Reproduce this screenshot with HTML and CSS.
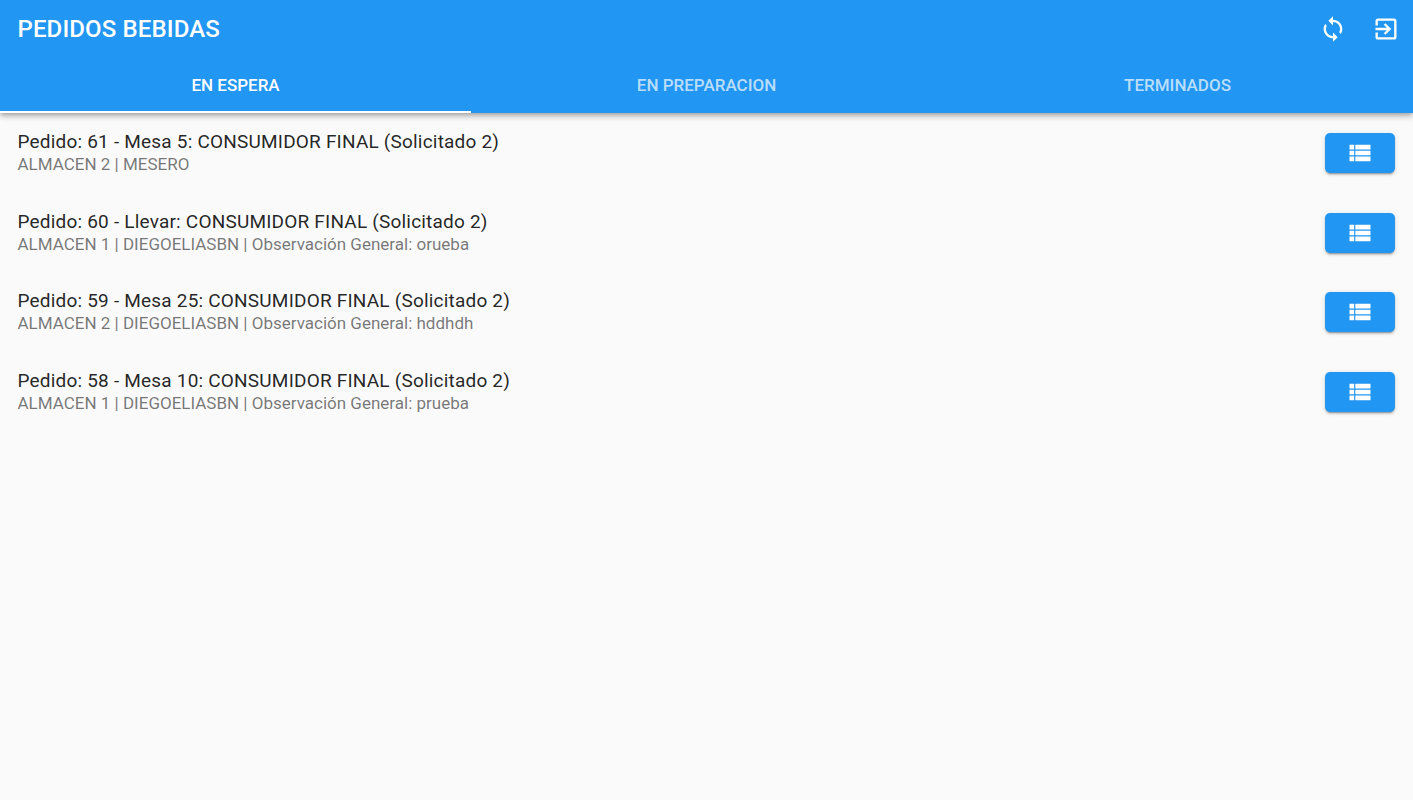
FILE: index.html
```html
<!DOCTYPE html>
<html lang="es">
<head>
<meta charset="utf-8">
<title>Pedidos Bebidas</title>
<link rel="stylesheet" href="styles.css">
</head>
<body>
<header class="appbar">
  <div class="toolbar">
    <h1 class="title">PEDIDOS BEBIDAS</h1>
    <div class="actions">
      <svg class="action" viewBox="0 0 24 24"><path d="M12 4V1L8 5l4 4V6c3.31 0 6 2.69 6 6 0 1.01-.25 1.97-.7 2.8l1.46 1.46C19.54 15.03 20 13.57 20 12c0-4.42-3.58-8-8-8zm0 14c-3.31 0-6-2.69-6-6 0-1.01.25-1.97.7-2.8L5.24 7.74C4.46 8.97 4 10.43 4 12c0 4.42 3.58 8 8 8v3l4-4-4-4v3z"/></svg>
      <svg class="action" viewBox="0 0 24 24"><path d="M10.09 15.59L11.5 17l5-5-5-5-1.41 1.41L12.67 11H3v2h9.67l-2.58 2.59zM19 3H5c-1.11 0-2 .9-2 2v4h2V5h14v14H5v-4H3v4c0 1.1.89 2 2 2h14c1.1 0 2-.9 2-2V5c0-1.1-.9-2-2-2z"/></svg>
    </div>
  </div>
  <nav class="tabs">
    <div class="tab tab-active">EN ESPERA</div>
    <div class="tab">EN PREPARACION</div>
    <div class="tab">TERMINADOS</div>
  </nav>
</header>
<main class="list">
  <div class="row">
    <div class="row-text">
      <div class="row-title">Pedido: 61 - Mesa 5: CONSUMIDOR FINAL (Solicitado 2)</div>
      <div class="row-sub">ALMACEN 2 | MESERO</div>
    </div>
    <button class="row-btn"><svg class="btn-icon" viewBox="0 0 24 24"><path d="M3 14h4v-4H3v4zm0 5h4v-4H3v4zM3 9h4V5H3v4zm5 5h13v-4H8v4zm0 5h13v-4H8v4zM8 5v4h13V5H8z"/></svg></button>
  </div>
  <div class="row">
    <div class="row-text">
      <div class="row-title">Pedido: 60 - Llevar: CONSUMIDOR FINAL (Solicitado 2)</div>
      <div class="row-sub">ALMACEN 1 | DIEGOELIASBN | Observación General: orueba</div>
    </div>
    <button class="row-btn"><svg class="btn-icon" viewBox="0 0 24 24"><path d="M3 14h4v-4H3v4zm0 5h4v-4H3v4zM3 9h4V5H3v4zm5 5h13v-4H8v4zm0 5h13v-4H8v4zM8 5v4h13V5H8z"/></svg></button>
  </div>
  <div class="row">
    <div class="row-text">
      <div class="row-title">Pedido: 59 - Mesa 25: CONSUMIDOR FINAL (Solicitado 2)</div>
      <div class="row-sub">ALMACEN 2 | DIEGOELIASBN | Observación General: hddhdh</div>
    </div>
    <button class="row-btn"><svg class="btn-icon" viewBox="0 0 24 24"><path d="M3 14h4v-4H3v4zm0 5h4v-4H3v4zM3 9h4V5H3v4zm5 5h13v-4H8v4zm0 5h13v-4H8v4zM8 5v4h13V5H8z"/></svg></button>
  </div>
  <div class="row">
    <div class="row-text">
      <div class="row-title">Pedido: 58 - Mesa 10: CONSUMIDOR FINAL (Solicitado 2)</div>
      <div class="row-sub">ALMACEN 1 | DIEGOELIASBN | Observación General: prueba</div>
    </div>
    <button class="row-btn"><svg class="btn-icon" viewBox="0 0 24 24"><path d="M3 14h4v-4H3v4zm0 5h4v-4H3v4zM3 9h4V5H3v4zm5 5h13v-4H8v4zm0 5h13v-4H8v4zM8 5v4h13V5H8z"/></svg></button>
  </div>
</main>
</body>
</html>
```
FILE: styles.css
```css
* { box-sizing: border-box; }
html, body { margin: 0; height: 100%; }
body {
  background: #fafafa;
  font-family: Roboto, "Liberation Sans", sans-serif;
  overflow: hidden;
}
.appbar {
  background: #2196f3;
  color: #fff;
  height: 113px;
  box-shadow: 0 2px 4px -1px rgba(0,0,0,.2), 0 4px 5px 0 rgba(0,0,0,.14), 0 1px 10px 0 rgba(0,0,0,.12);
}
.toolbar {
  height: 58px;
  display: flex;
  align-items: center;
  justify-content: space-between;
  padding: 0 13px 0 17.5px;
}
.title {
  margin: 0;
  font-size: 24px;
  font-weight: 500;
  letter-spacing: .12px;
  line-height: 1;
}
.actions { display: flex; gap: 25px; }
.action { width: 28px; height: 28px; fill: #fff; display: block; }
.tabs { display: flex; height: 55px; }
.tab {
  flex: 1;
  display: flex;
  align-items: center;
  justify-content: center;
  padding-top: 1px;
  font-size: 17px;
  font-weight: 500;
  color: rgba(255,255,255,.7);
  border-bottom: 2px solid transparent;
}
.tab-active { color: #fff; border-bottom-color: #fff; }
.list { padding-top: 20px; display: flex; flex-direction: column; gap: 39.5px; }
.row {
  display: flex;
  align-items: center;
  justify-content: space-between;
  height: 40px;
  padding: 0 18px 0 17.5px;
}
.row-title { font-size: 19px; letter-spacing: .2px; line-height: 23px; color: rgba(0,0,0,.87); white-space: nowrap; }
.row-sub { font-size: 17px; line-height: 23px; color: rgba(0,0,0,.54); white-space: nowrap; }
.row-btn {
  width: 70px;
  height: 40px;
  padding: 0;
  border: 0;
  border-radius: 5px;
  background: #2196f3;
  display: flex;
  align-items: center;
  justify-content: center;
  box-shadow: 0 3px 1px -2px rgba(0,0,0,.2), 0 2px 2px 0 rgba(0,0,0,.14), 0 1px 5px 0 rgba(0,0,0,.12);
}
.btn-icon { width: 28px; height: 28px; fill: #fff; display: block; }
```
